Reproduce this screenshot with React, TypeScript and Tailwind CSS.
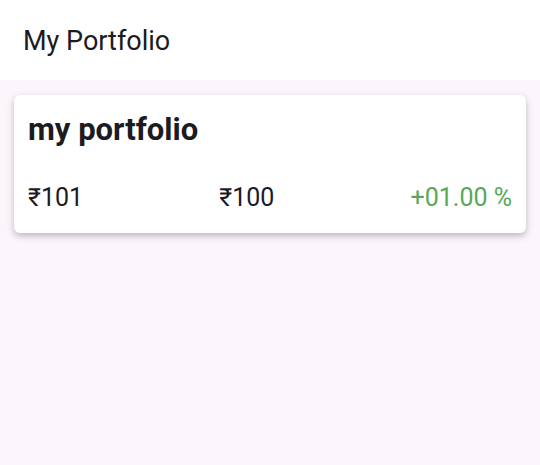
export default function App() {
  return (
    <div className="w-[540px] h-[465px] bg-[#fcf5fc] font-['Roboto',sans-serif] flex flex-col">
      <header className="h-[80px] bg-white flex items-center px-[23px] pt-[2px] shrink-0">
        <h1 className="text-[27px] text-[#1c1b1f] leading-none">My Portfolio</h1>
      </header>
      <div className="px-[14px] pt-[15px]">
        <div className="bg-white rounded-[6px] shadow-[0_3px_7px_rgba(0,0,0,0.25)] px-[14px] pt-[17px] pb-[20px]">
          <h2 className="text-[31px] font-bold text-[#1c1b1f] leading-[36px]">my portfolio</h2>
          <div className="flex justify-between items-center mt-[35px] text-[25px] leading-[30px] text-[#1c1b1f]">
            <span>₹101</span>
            <span>₹100</span>
            <span className="text-[#58a858]">+01.00 %</span>
          </div>
        </div>
      </div>
    </div>
  );
}
